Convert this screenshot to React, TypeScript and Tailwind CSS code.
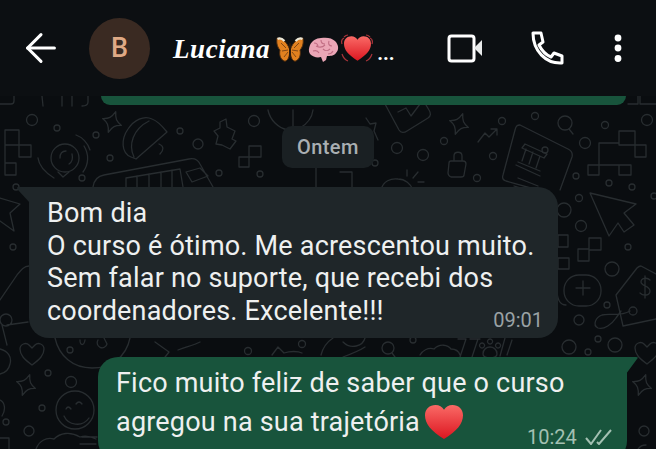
import { ArrowLeft } from "lucide-react";

function Star({ x, y, s = 1 }: { x: number; y: number; s?: number }) {
  return (
    <path
      transform={`translate(${x} ${y}) scale(${s}) rotate(20)`}
      d="M0-11C2-4 4-2 10 0 4 2 2 4 0 11-2 4-4 2-10 0-4-2-2-4 0-11Z"
    />
  );
}

function Heart({ x, y, s = 1 }: { x: number; y: number; s?: number }) {
  return (
    <path
      transform={`translate(${x} ${y}) scale(${s})`}
      d="M0 12C-8 6-12 2-12-4-12-9-6-11-3-8L0-5 3-8C6-11 12-9 12-4 12 2 8 6 0 12Z"
    />
  );
}

const rings: [number, number, number][] = [
  [32, 120, 5.5], [57, 128, 3], [96, 135, 3], [110, 158, 3], [82, 178, 3], [180, 131, 3], [198, 144, 5], [254, 121, 5.5],
  [219, 173, 3], [260, 174, 3], [16, 187, 3], [13, 247, 3], [48, 373, 3], [71, 382, 5.5], [42, 408, 3], [29, 431, 5],
  [6, 422, 3], [502, 121, 3.5], [535, 116, 3.5], [444, 141, 3.5], [397, 148, 5.5], [423, 155, 5.5], [493, 156, 3.5],
  [477, 178, 3.5], [375, 163, 3], [585, 143, 5.5], [605, 125, 3.5], [647, 120, 5.5], [576, 176, 3], [609, 183, 3],
  [632, 187, 3], [579, 198, 3.5], [564, 210, 7], [581, 226, 5.5], [628, 247, 3], [612, 269, 7], [607, 305, 3],
  [633, 311, 4], [579, 320, 5], [598, 339, 3], [615, 345, 7], [569, 347, 7], [588, 352, 3], [654, 196, 3], [248, 351, 3.5],
  [302, 344, 3.5], [413, 340, 3], [644, 431, 5], [70, 350, 3],
];

// background doodles of the chat wallpaper
function Wallpaper() {
  return (
    <svg className="absolute inset-0" width="656" height="449" fill="none" stroke="#282d30" strokeWidth="1.3" strokeLinecap="round" strokeLinejoin="round">
      {rings.map(([x, y, r], i) => (
        <circle key={i} cx={x} cy={y} r={r} />
      ))}
      <Star x={112} y={122} />
      <Star x={26} y={385} />
      <Star x={642} y={385} />
      <Star x={459} y={124} />
      <Heart x={32} y={353} />
      <Heart x={647} y={352} />

      {/* left squares */}
      <path d="M5 130h14v15h12v12h-12v-12h-14zM5 145v18h11v12h-11v-12" />
      {/* speech bubble with sound */}
      <circle cx="65" cy="158" r="14" />
      <path d="M58 172l5 5 6-5M60 158c0-5 3-7 6-7M72 154c1 4 0 8-3 10M84 146c5 8 5 18-1 26M76 135c6 2 12 8 14 15M38 158c1 8 8 15 16 20" />
      {/* taco */}
      <path d="M131 157c-10-4-10-18-3-28 6-9 16-14 24-10 6 2 11 8 15 13l-31 27zM134 157c-6-12-1-28 15-36M160 154c4-4 4-8-1-10" />
      {/* apple core */}
      <path d="M220 122l6-3 1 8 8 4-3 8 4 2-6 8-8-4-6-1 2-8-4-5 6-3z" />
      <path d="M249 146h12v11h-12zM239 157h10v10h-10z" />
      {/* bus */}
      <path d="M93 187c1-7 5-11 11-12l85-16c5-1 9 1 11 5l13 23M126 187v-9l54-9 3 18M137 176v11M149 174v13M161 172v15M172 170v17M186 172l14-4 8 8-16 6z" />
      {/* bulb */}
      <path d="M268 110c2 10 10 18 20 20M313 110c-1 8-6 14-13 18M293 110v16M316 168v19M340 172h12v15" />
      {/* crown tag */}
      <path d="M385 104l14 26c2 3 5 3 8 1l21-13c3-2 3-5 1-8l-6-10M398 112l8-4 5 8 9-12 3-4" />
      <path d="M366 118l4 6 6-1-2 8 4 9" />
      {/* lock */}
      <path d="M451 161h12c2 0 3 1 3 3l-2 11c0 1-1 2-3 2h-10c-2-1-3-2-3-4l1-10c0-1 1-2 2-2zM454 161v-5c0-5 8-5 8 0v5" />
      <path d="M478 142l7-9 4 4 8-8M491 129h6v6" />
      {/* dome with rays */}
      <path d="M381 190c2-9 10-12 17-11 7 0 13 5 15 11M407 170v6M418 172l-5 6M424 182h-6" />
      {/* magnifier */}
      <circle cx="565" cy="123" r="7" />
      <path d="M569 129l4 5" />
      {/* document with bank */}
      <path d="M520 125c-3 0-4 1-5 5l-12 45c-1 3 0 5 3 6l32 9M520 125l48 24c4 2 5 4 4 8l-12 33" />
      <path d="M525 144l22 10-3 4-22-10zM526 149l-4 12M533 152l-4 12M540 156l-4 12M518 162l22 9M516 165l24 11M518 178l20 8M514 186l14 4" />
      <circle cx="545" cy="150" r="3" />
      {/* right squares */}
      <path d="M599 143h20v-12h16v14h11v12h-11v-12h-16v-2M599 143v22h32v10h-12v-10M599 165v10h-11v-10z" />
      {/* cursor */}
      <path d="M590 193l46 11-12 9 10 12-10 7-6-9-9 13z" />
      <path d="M589 238h12v12h-12zM578 249h11v12h-11zM558 235h10v12h-10zM558 258h11v11h-11z" />
      {/* plus pill */}
      <rect x="564" y="275" width="37" height="31" rx="15" />
      <path d="M583 281v14M576 288h14M566 305c-7 0-9-6-9-16" />
      {/* price tag */}
      <path d="M656 274l-15-8c-2 0-3 1-4 2l-21 27 7 31 33-7" />
      <path d="M650 280c-3-3-9-2-9 2s9 4 9 9-7 5-10 2M645 276v22" />
      <path d="M630 311c-10 6-20 2-28 4-6 2-10 10-4 13 6 2 14-4 18-10l5-7" />
      {/* cursor at the left */}
      <path d="M0 198l20 6-10 9 4 18-14-10" />
      <path d="M29 266c-5 0-8 4-12 9L0 300M2 325l5 20M7 325l21-3M0 320a6 6 0 1 0 12 0 6 6 0 1 0-12 0" />
      {/* face under the first bubble */}
      <path d="M55 338c4 18 18 30 37 30 18 0 34-10 38-30M80 340c0 6 4 6 5 0M98 340a5 5 0 1 0 9 4M104 338l3 6" />
      <path d="M155 342l14 10-7 9M178 350c8-3 16-5 22-8" />
      {/* smile */}
      <circle cx="75" cy="410" r="19" />
      <path d="M66 409q2-4 5 0M76 404q3-4 6 0M64 416c4 9 18 12 25 2M36 449c3-8 10-12 18-10 6-6 16-8 26-2 6-2 12 0 16 2M82 437h15M80 444h16" />
      <path d="M0 438h9v11" />
      {/* strip between the bubbles */}
      <path d="M272 355l6-8 6 6c6-2 14-2 18 0M321 355c2-8 6-13 12-17M343 342c8 8 20 4 22-4M343 357c8-3 16-6 22-10" />
      <circle cx="388" cy="348" r="6" />
      <path d="M392 353l3 4M420 355c2-4 8-8 14-6 6-6 14-4 17 0 6 0 8 3 9 6M458 339h8l-6 18M478 339l-6 18M480 339h-10" />
      <path d="M483 354c0-5 4-7 7-7s7 2 7 7-14 5-14 0zM482 343a2.500 2.500 0 1 0 .1 0M490 339a2.500 2.500 0 1 0 .1 0M498 343a2.500 2.500 0 1 0 .1 0M505 338l-5 18M512 340l-5 15" />
      <path d="M0 349c8 2 12 8 10 15-1 5-5 9-10 10M0 400c5 2 6 10 2 16M638 449c2-3 4-4 8-4" />
      {/* above the pill */}
      <path d="M14 96v5c0 2-1 3-3 3H0M42 96l1 10M62 96v10M72 96v10M88 96v6c0 2-2 4-6 4M628 104h10v-8M640 96v8h16" />
    </svg>
  );
}

function Butterfly() {
  return (
    <svg width="28" height="25" viewBox="0 0 28 25">
      <path d="M13.500 12C11 5 6 1 1 1c-1 6 1 10 3 12-1 4 0 9 4 11 3 1 5-3 5.500-7z" fill="#e2811f" stroke="#4c2c10" strokeWidth="1" />
      <path d="M14.500 12C17 5 22 1 27 1c1 6-1 10-3 12 1 4 0 9-4 11-3 1-5-3-5.500-7z" fill="#e2811f" stroke="#4c2c10" strokeWidth="1" />
      <path d="M5 6l5 5M6 14l6-1M8 20l4-5M23 6l-5 5M22 14l-6-1M20 20l-4-5" stroke="#6a3a12" strokeWidth="0.8" />
      <path d="M1.500 2c2-1 5 0 7 2M26.500 2c-2-1-5 0-7 2" stroke="#ece8d8" strokeWidth="2.200" fill="none" />
      <rect x="13" y="6" width="2" height="15" rx="1" fill="#2b1a0c" />
    </svg>
  );
}

function Brain() {
  return (
    <svg width="31" height="25" viewBox="0 0 31 25">
      <path d="M2 8c2-4 6-7 11-7 6-1 11 0 14 3 4 4 4 9 1 12-2 3-6 3-9 3l-1 4-3 2-2-5c-4 1-8 0-11-3C0 14 1 11 2 8z" fill="#eba6b6" />
      <path d="M6 6c3 0 4 2 4 4M13 3c0 3 2 4 4 4M21 4c-1 3 0 5 3 5M5 14c3-1 5 0 6 2M15 12c2 2 5 2 7 0M25 14c-1 2-3 3-5 3M8 9c4 2 7 1 9-1" stroke="#c06d83" strokeWidth="1.100" fill="none" />
    </svg>
  );
}

function RedHeart({ size }: { size: number }) {
  return (
    <svg width={size} height={size} viewBox="0 0 40 40">
      <defs>
        <linearGradient id="hg" x1="0" y1="0" x2="0" y2="1">
          <stop offset="0" stopColor="#fa6a66" />
          <stop offset="1" stopColor="#dc1620" />
        </linearGradient>
      </defs>
      <path d="M20 38C6 29 0 22 0 13 0 6 5 2 11 2c4 0 7 2 9 5 2-3 5-5 9-5 6 0 11 4 11 11 0 9-6 16-20 25z" fill="url(#hg)" />
    </svg>
  );
}

function BeatingHeart() {
  return (
    <div className="relative w-[32px] h-[30px] flex items-center justify-center">
      <RedHeart size={27} />
      <svg className="absolute inset-0" width="32" height="30" fill="none" stroke="#a8343a" strokeWidth="1.200">
        <path d="M3 4c-2 1-3 3-2 6M7 1C5 1 4 2 3 3M29 4c2 1 3 3 2 6M25 1c2 0 3 1 4 2M1 20c1 3 3 6 6 7M31 20c-1 3-3 6-6 7" />
      </svg>
    </div>
  );
}

export default function App() {
  return (
    <div className="relative w-[656px] h-[449px] overflow-hidden bg-[#0a0d10] font-['Roboto',sans-serif] text-[#eef0f0]">
      <Wallpaper />

      <header className="relative h-[96px] bg-[#0c0f12] flex items-center">
        <ArrowLeft className="ml-[18px] text-white" size={46} strokeWidth={1.6} />
        <div className="ml-[25px] w-[61px] h-[61px] rounded-full bg-[#3a2a22] flex items-center justify-center text-[#dfa985] text-[27px] font-medium">B</div>
        <div className="ml-[23px] w-[266px] flex items-center mt-[3px]">
          <span className="font-['Liberation_Serif',serif] italic font-bold text-[27px] text-white mr-[6px] tracking-[0.6px]">Luciana</span>
          <Butterfly />
          <span className="ml-[4px]"><Brain /></span>
          <span className="ml-[2px] mt-[-2px]"><BeatingHeart /></span>
          <span className="ml-[4px] text-white text-[20px] font-bold leading-none mt-[6px]">...</span>
        </div>
        <svg className="ml-[8px]" width="36" height="30" viewBox="0 0 36 30" fill="none">
          <rect x="2" y="3" width="25" height="25" rx="2.500" stroke="#fff" strokeWidth="3" />
          <path d="M27 15l8-8v16z" fill="#e8eaea" />
        </svg>
        <svg className="ml-[47px]" width="34" height="34" viewBox="0 0 34 34" fill="none" stroke="#fff" strokeWidth="3" strokeLinejoin="round">
          <path d="M3 2h8l2 9-4 3c3 6 7 10 12 12l3-4 8 3v7c-16 1-29-12-29-30z" />
        </svg>
        <svg className="ml-[49px]" width="10" height="30" viewBox="0 0 10 30" fill="#fff">
          <circle cx="5" cy="5" r="3.400" />
          <circle cx="5" cy="15" r="3.400" />
          <circle cx="5" cy="25.500" r="3.400" />
        </svg>
      </header>

      <main className="relative flex flex-col">
        <div className="ml-[101px] w-[525px] h-[9px] bg-[#18543c] rounded-b-[14px]" />

        <div className="mt-[21px] self-start ml-[282px] h-[42px] px-[15px] rounded-[10px] bg-[#1a2023] flex items-center text-[#a9afb2] text-[20px] font-medium tracking-[0.4px]">Ontem</div>

        <div className="relative mt-[19px] ml-[29px] w-[529px] h-[151px] bg-[#1f2629] rounded-[20px] rounded-tl-none pl-[18px] pt-[10px] text-[27px] tracking-[0.2px] leading-[32.7px]">
          <svg className="absolute left-[-12px] top-0" width="13" height="16" fill="#1f2629">
            <path d="M13 0H1Q-1 0 1 3L13 16z" />
          </svg>
          <p>Bom dia</p>
          <p>O curso é ótimo. Me acrescentou muito.</p>
          <p>Sem falar no suporte, que recebi dos</p>
          <p>coordenadores. Excelente!!!</p>
          <span className="absolute right-[15px] bottom-[3px] text-[20px] leading-[30px] tracking-normal text-[#9aa2a5]">09:01</span>
        </div>

        <div className="relative mt-[19px] ml-[98px] w-[529px] h-[104px] bg-[#18543c] rounded-[20px] rounded-tr-none pl-[18px] pt-[7px] text-[27px] tracking-[0.2px] leading-[39px]">
          <svg className="absolute right-[-11px] top-0" width="12" height="17" fill="#18543c">
            <path d="M0 0H10Q13 0 11 2L0 17z" />
          </svg>
          <p>Fico muito feliz de saber que o curso</p>
          <p className="flex items-center">agregou na sua trajetória <span className="ml-[5px] mt-[-2px]"><RedHeart size={38} /></span></p>
          <div className="absolute left-[429px] top-[70px] flex items-center text-[20px] leading-[20px] tracking-normal text-[#a3c0b2]">
            10:24
            <svg className="ml-[8px]" width="27" height="16" viewBox="0 0 27 16" fill="none" stroke="#a3c0b2" strokeWidth="2">
              <path d="M1 9l5 6L16 1M12 13l2 2L26 1" />
            </svg>
          </div>
        </div>
      </main>
    </div>
  );
}
